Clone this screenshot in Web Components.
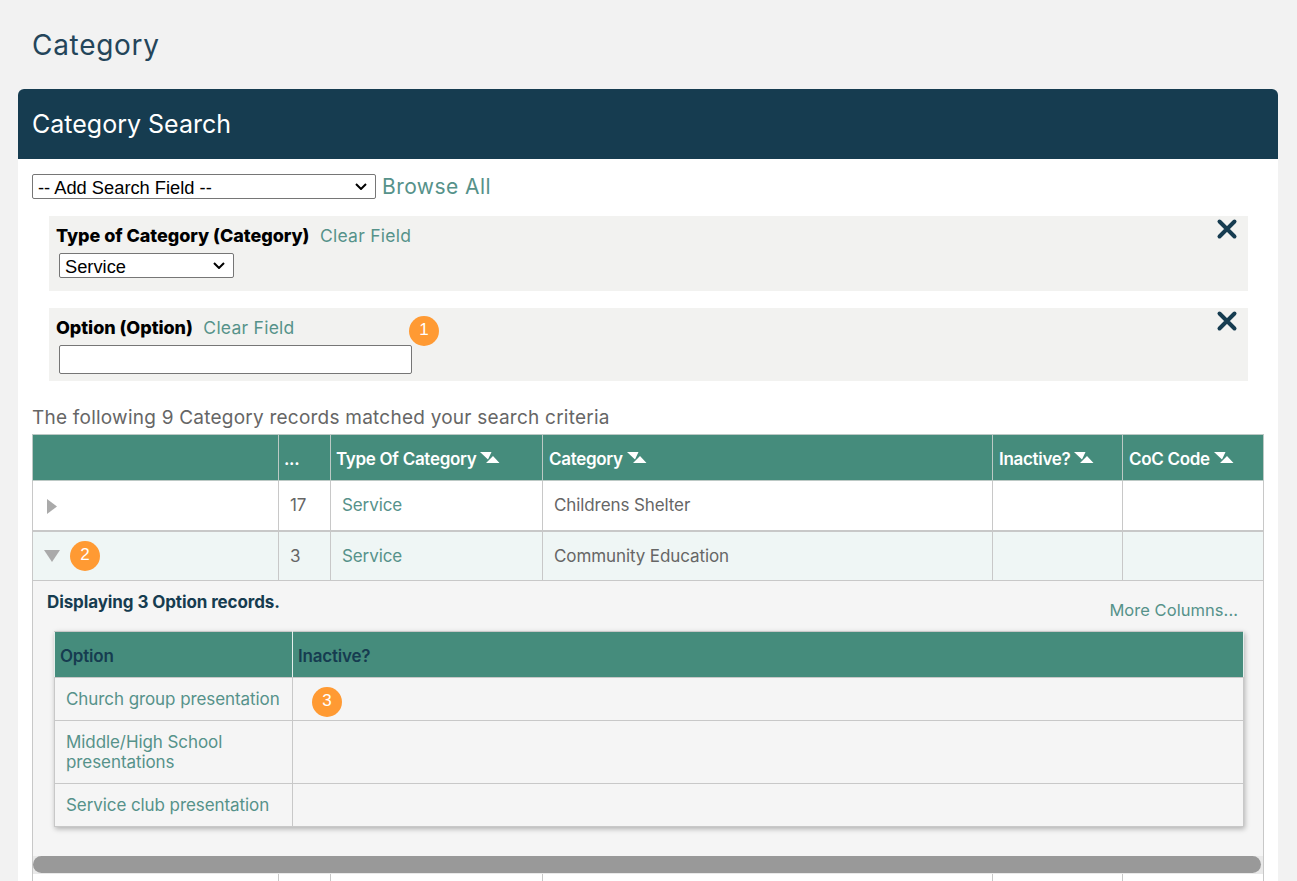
<!DOCTYPE html>
<html lang="en"><head><meta charset="utf-8"><title>Category</title>
<style>
html,body{margin:0;padding:0;height:881px;overflow:hidden;background:#f2f2f2;font-family:Inter,"Liberation Sans",sans-serif;}
</style></head><body>
<cat-page></cat-page>
<script>
const LINK='#56928a';
const BASE=`*{box-sizing:border-box}a{color:${LINK};text-decoration:none}`;
const CHEV="url(\"data:image/svg+xml,%3Csvg xmlns='http://www.w3.org/2000/svg' width='12' height='7' viewBox='0 0 12 7'%3E%3Cpath d='M1 1l5 5 5-5' fill='none' stroke='%23000' stroke-width='2'/%3E%3C/svg%3E\")";
function def(name,html,init){
  customElements.define(name,class extends HTMLElement{
    constructor(){super();const r=this.attachShadow({mode:'open'});
      r.innerHTML=`<style>${BASE}</style>`+(typeof html==='function'?html(this):html);}
    connectedCallback(){ if(init) init(this); }
  });
}
const SEL=`select{appearance:none;-webkit-appearance:none;font:18.300px/23px "Liberation Sans",Arial,sans-serif;color:#000;border:1px solid #767676;border-radius:2px;padding:.5px 0 0 5px;height:25px;margin:0;background:#fff ${CHEV} no-repeat right 8px center}`;
def('step-badge',`<style>:host{position:absolute;width:30px;height:30px;border-radius:50%;background:#ff9a33;color:#fff;font:400 17px/28px "Liberation Sans",sans-serif;text-align:center;display:block}</style><slot></slot>`);
def('sort-icon',`<style>:host{display:inline-block;width:20px;height:13px;vertical-align:1px;margin-left:4px}svg{display:block}</style><svg width="20" height="13" viewBox="0 0 20 13"><path d="M0 1h11.500L8 8.500zM6 12 13 5l6.500 7z" fill="#fff"/></svg>`);
def('close-icon',`<style>:host{position:absolute;right:10px;top:2px;width:22px;height:22px;display:block}svg{display:block}</style><svg width="22" height="22" viewBox="0 0 22 22"><path d="M3.500 3.500 18.500 18.500M18.500 3.500 3.500 18.500" stroke="#163c50" stroke-width="4" stroke-linecap="round"/></svg>`);
def('search-field',el=>`<style>
:host{display:block;position:relative;background:#f2f2f0;margin:0 0 17px 17px;width:1199px;padding:7px 0 0 7px}
.l{display:flex;align-items:baseline;gap:10.500px;height:25px;line-height:25px}
b{font:800 18px/25px Inter,"Liberation Sans",sans-serif;color:#000;letter-spacing:-.05px}
a{font-size:17.500px;letter-spacing:.25px;font-weight:400}
.c{margin:5px 0 0 3px;display:flex}
</style><div class="l"><b>${el.getAttribute('label')}</b><a href="#">Clear Field</a></div><div class="c"><slot></slot></div><close-icon></close-icon>`);
def('main-table',`<style>
:host{display:block;margin:3px 0 0 0;width:1232px;position:relative}
table{border-collapse:collapse;table-layout:fixed;width:1232px;font-family:Inter,"Liberation Sans",sans-serif}
th,td{border:1px solid #c8c8c8;padding:0}
th{background:#458c7c;color:#fff;font-weight:600;font-size:17px;letter-spacing:-.3px;text-align:left;height:46px;padding:2px 6px 0;border-color:#bcc9c5}
th.ty{padding-left:5px}
td{font-size:17px;color:#666;height:50px;padding:1px 11px 0;letter-spacing:-.1px}
tr.r1 td{padding-top:0;border-bottom:2px solid #c8c8c8}
tr.open td{background:#eff6f5;height:50px}
td.i{position:relative;padding:0}
svg{position:absolute;display:block}
td.d{padding:0;background:#f5f5f5;height:293px;position:relative;vertical-align:top}
.dh{display:flex;justify-content:space-between;padding:11px 25px 0 14px;height:50px}
.dh b{font-weight:700;font-size:17px;color:#163c50;letter-spacing:-.1px;line-height:20px}
.dh a{font-size:16.500px;margin-top:8px;line-height:20px;letter-spacing:.05px}
.sbw{position:absolute;left:0;right:0;top:275px;height:18px;background:#e9e9e9}
.sbi{height:17px;background:#999;border-radius:9px;margin-right:2px}
a{font-size:17px}
tr.n td{height:60px;background:#fff}
</style><table><colgroup><col style="width:246px"><col style="width:52px"><col style="width:212px"><col style="width:450px"><col style="width:130px"><col style="width:141px"></colgroup>
<thead><tr><th></th><th class="ty">...</th><th class="ty">Type Of Category<sort-icon></sort-icon></th><th>Category<sort-icon></sort-icon></th><th>Inactive?<sort-icon></sort-icon></th><th>CoC Code<sort-icon></sort-icon></th></tr></thead>
<tbody>
<tr class="r1"><td class="i"><svg style="left:14px;top:18px" width="11" height="15" viewBox="0 0 11 15"><path d="M0 0 10 7.500 0 15z" fill="#aaa"/></svg></td><td>17</td><td><a href="#">Service</a></td><td>Childrens Shelter</td><td></td><td></td></tr>
<tr class="open"><td class="i"><svg style="left:11px;top:18px" width="16" height="12" viewBox="0 0 16 12"><path d="M0 0H16L8 12z" fill="#aaa"/></svg><step-badge style="left:37px;top:9px">2</step-badge></td><td>3</td><td><a href="#">Service</a></td><td>Community Education</td><td></td><td></td></tr>
<tr><td class="d" colspan="6"><div class="dh"><b>Displaying 3 Option records.</b><a href="#">More Columns...</a></div><option-table></option-table><div class="sbw"><div class="sbi"></div></div></td></tr>
<tr class="n"><td></td><td></td><td></td><td></td><td></td><td></td></tr>
</tbody></table>`);
def('option-table',`<style>
:host{display:block;margin-left:21px;width:1190px;box-shadow:1px 2px 5px rgba(0,0,0,.28)}
table{border-collapse:collapse;table-layout:fixed;width:1190px;font-family:Inter,"Liberation Sans",sans-serif}
th,td{border:1px solid #c8c8c8}
th{background:#458c7c;color:#163c50;font-weight:600;font-size:17px;letter-spacing:-.2px;text-align:left;height:46px;padding:3px 5px 0 5px;border-color:#c8c8c8 #e4eeeb}
td{height:43px;padding:0 11px;vertical-align:middle;position:relative;background:#f5f5f5}
tr.t td{height:63px}
a{font-size:17px;line-height:20px;letter-spacing:-.08px;display:block}
</style><table><colgroup><col style="width:238px"><col></colgroup>
<thead><tr><th>Option</th><th>Inactive?</th></tr></thead>
<tbody>
<tr><td><a href="#">Church group presentation</a></td><td><step-badge style="left:19px;top:9px">3</step-badge></td></tr>
<tr class="t"><td><a href="#">Middle/High School presentations</a></td><td></td></tr>
<tr><td><a href="#">Service club presentation</a></td><td></td></tr>
</tbody></table>`);
def('search-panel',`<style>${SEL}
:host{display:block;margin:0 19px 0 18px;background:#fff;border-radius:6px 6px 0 0;height:900px}
header{background:#163c50;color:#fff;height:70px;line-height:70px;border-radius:6px 6px 0 0;padding-left:14px;font-size:25px;font-weight:400}
.b{padding:15px 14px 0 14px}
.top{display:flex;align-items:center;gap:6px;height:25px;margin-bottom:17px}
input{background:#fff;border:1px solid #767676;border-radius:2px;padding:0 0 0 1px;margin:0;width:353px;height:29px;display:block}
.top a{font-size:21px;letter-spacing:.45px;line-height:25px}
p{margin:24px 0 0;font-size:19px;color:#666;height:26px;line-height:26px;letter-spacing:.23px}
</style><header>Category Search</header><div class="b">
<div class="top"><select style="width:344px"><option>-- Add Search Field --</option></select><a href="#">Browse All</a></div>
<search-field label="Type of Category (Category)" style="height:75px"><select style="width:175px"><option>Service</option></select></search-field>
<search-field label="Option (Option)" style="height:73px"><input type="text" aria-label="Option"><step-badge style="left:360px;top:8px">1</step-badge></search-field>
<p>The following 9 Category records matched your search criteria</p>
<main-table></main-table></div>`);
def('cat-page',`<style>
:host{display:block;height:881px;overflow:hidden;color:#1f3d50}
h1{margin:0;padding:0 0 0 32px;height:89px;font-weight:400;font-size:28px;line-height:90px;color:#24455a;letter-spacing:.7px}
</style><h1>Category</h1><search-panel></search-panel>`);
</script></body></html>
